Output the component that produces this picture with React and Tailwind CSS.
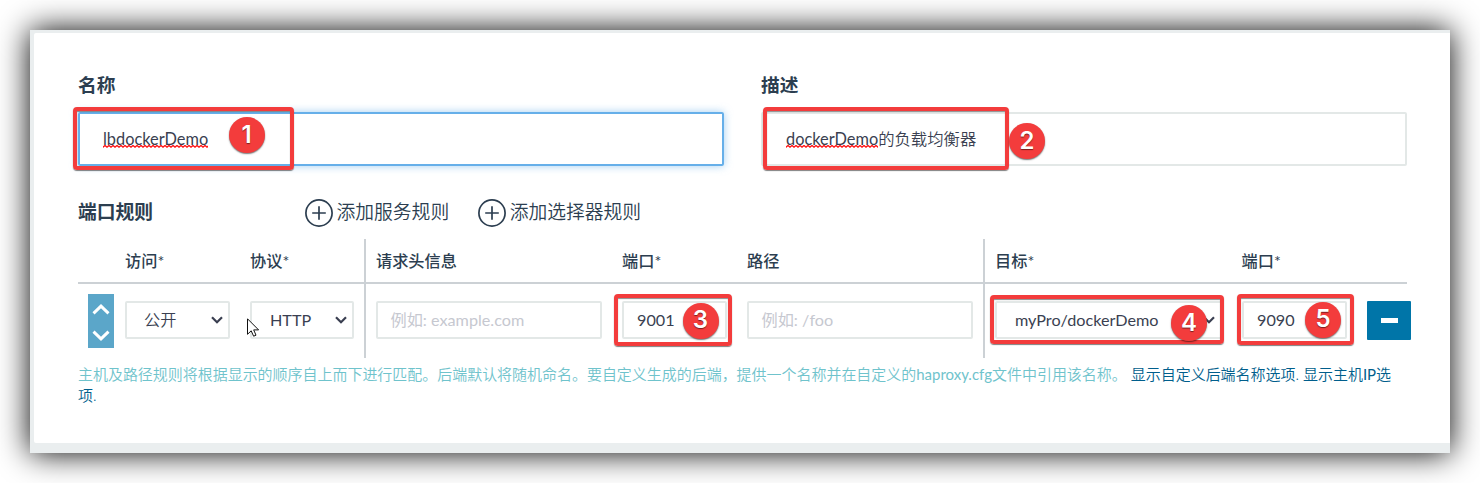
import React from "react";

const mark =
  "pointer-events-none absolute z-10 rounded-[4px] border-4 border-[#f33c3c] shadow-[0_1px_1px_rgba(0,0,0,0.5),inset_0_1px_1px_rgba(0,0,0,0.45)]";

function Badge({ n, className }) {
  return (
    <span
      className={`absolute z-20 flex h-9 w-9 items-center justify-center rounded-full bg-[#f33c3c] pb-px font-['Inter',sans-serif] text-[24px] leading-none font-semibold text-white shadow-[0_1px_1.5px_rgba(0,0,0,0.55)] [text-shadow:0_1px_1px_rgba(0,0,0,0.5)] ${className}`}
    >
      {n}
    </span>
  );
}

function Chevron({ className }) {
  return (
    <svg viewBox="0 0 12 8" className={className} fill="none" stroke="currentColor" strokeWidth="2.2">
      <path d="M1 1.2 L6 6.2 L11 1.2" />
    </svg>
  );
}

function AddIcon() {
  return (
    <svg viewBox="0 0 28 28" className="h-7 w-7" fill="none" stroke="currentColor">
      <circle cx="14" cy="14" r="13.1" strokeWidth="1.7" />
      <path d="M14 7.2 V20.8 M7.2 14 H20.8" strokeWidth="1.7" />
    </svg>
  );
}

function Squiggle({ children }) {
  return (
    <span className="relative inline-block">
      {children}
      <svg className="absolute bottom-[3px] left-0 h-[3px] w-full" aria-hidden="true">
        <defs>
          <pattern id="wave" width="4" height="3" patternUnits="userSpaceOnUse">
            <path d="M-1 3 L2 0.5 L5 3" fill="none" stroke="#ff1010" strokeWidth="1.3" />
          </pattern>
        </defs>
        <rect width="100%" height="3" fill="url(#wave)" />
      </svg>
    </span>
  );
}

function Field({ width, className = "", children }) {
  return (
    <div className={`relative flex h-[38px] shrink-0 items-center rounded-[2px] border-2 border-[#e3e8e7] ${width} ${className}`}>
      {children}
    </div>
  );
}

function Head({ width, required, children }) {
  return (
    <div className={`shrink-0 font-medium ${width}`}>
      {children}
      {required && <span className="font-normal">*</span>}
    </div>
  );
}

const headRow = "flex h-[45px] items-center border-b-2 border-[#ccd1d5]";
const bodyRow = "flex h-[74px] items-center pb-[2px]";

export default function App() {
  return (
    <div className="h-[483px] w-[1480px] overflow-hidden bg-white p-[30px] font-['Lato','Noto_Sans_CJK_SC',sans-serif] text-[16.2px] leading-6 text-[#3a3f51]">
      <div className="h-[423px] w-[1420px] bg-[#eaeeef] pt-[3px] pl-1 shadow-[0_0_30px_#000]">
        <div className="h-[410px] rounded-l-[2px] bg-white pt-[38px] pl-11">
          <div className="flex gap-[37px]">
            <div className="w-[646px]">
              <div className="h-[41px] text-[18.7px] leading-7 font-bold text-[#2c3e50]">名称</div>
              <div className="relative flex h-[54px] items-center rounded-[2px] border-2 border-[#66afe9] pl-[23px] text-[16.35px] shadow-[0_0_8px_rgba(102,175,233,0.6)]">
                <Squiggle>lbdockerDemo</Squiggle>
                <div className={`${mark} -top-[7px] -left-[7px] h-[63px] w-[221px]`} />
                <Badge n="1" className="top-[3px] left-[148.5px]" />
              </div>
            </div>
            <div className="w-[646px]">
              <div className="h-[41px] text-[18.7px] leading-7 font-bold text-[#2c3e50]">描述</div>
              <div className="relative flex h-[54px] items-center rounded-[2px] border-2 border-[#e3e8e7] pl-[23px] text-[16.35px]">
                <Squiggle>dockerDemo</Squiggle>
                <span className="font-[350]">的负载均衡器</span>
                <div className={`${mark} -top-[7px] left-0 h-[63px] w-[246px]`} />
                <Badge n="2" className="top-[9px] left-[246px]" />
              </div>
            </div>
          </div>

          <div className="mt-[31px] flex h-[31px] items-center text-[18.8px] text-[#2c3e50]">
            <div className="w-[227px] pb-[2px] font-bold">端口规则</div>
            <div className="flex items-center gap-[3.5px] font-[350]">
              <AddIcon />
              <span className="pb-[2px]">添加服务规则</span>
            </div>
            <div className="ml-[29px] flex items-center gap-[3.5px] font-[350]">
              <AddIcon />
              <span className="pb-[2px]">添加选择器规则</span>
            </div>
          </div>

          <div className="mt-[11px] flex h-[119px] w-[1329px]">
            <div className="w-[286px] shrink-0">
              <div className={`${headRow} pl-[47px] text-[#2c3e50]`}>
                <Head width="w-[125px]" required>访问</Head>
                <Head width="w-[104px]" required>协议</Head>
              </div>
              <div className={`${bodyRow} relative pl-2.5`}>
                <div className="mt-px mr-[11px] flex h-[54px] w-[26px] flex-col items-center justify-between bg-[#5ba6c9] py-[10px] text-white">
                  <svg viewBox="0 0 18 11" className="h-[11px] w-[18px]" fill="none" stroke="currentColor" strokeWidth="3">
                    <path d="M1.5 9.3 L9 2.1 L16.5 9.3" />
                  </svg>
                  <svg viewBox="0 0 18 11" className="-mb-[3px] h-[11px] w-[18px]" fill="none" stroke="currentColor" strokeWidth="3">
                    <path d="M1.5 1.7 L9 8.9 L16.5 1.7" />
                  </svg>
                </div>
                <Field width="w-[105px]" className="mr-5 pr-[5px] pl-[17px]">
                  <span className="font-[350]">公开</span>
                  <Chevron className="ml-auto h-2 w-3" />
                </Field>
                <Field width="w-[104px]" className="pr-[5px] pl-[18px]">
                  HTTP
                  <Chevron className="ml-auto h-2 w-3" />
                </Field>
                <svg viewBox="0 0 12 19" className="absolute top-[34px] left-[169px] h-[19px] w-3" fill="#fff" stroke="#111" strokeWidth="1">
                  <path d="M0.5 0.8 V16.3 L4.2 12.8 L6.6 18.2 L9 17.2 L6.7 11.9 H11.6 Z" />
                </svg>
              </div>
            </div>

            <div className="w-[619px] shrink-0 border-l-2 border-[#ccd1d5]">
              <div className={`${headRow} pl-2.5 text-[#2c3e50]`}>
                <Head width="w-[246px]">请求头信息</Head>
                <Head width="w-[125px]" required>端口</Head>
                <Head width="w-[226px]">路径</Head>
              </div>
              <div className={`${bodyRow} gap-5 pl-2.5`}>
                <Field width="w-[226px]" className="pl-[12.5px] text-[#c6c8d0]">例如: example.com</Field>
                <Field width="w-[105px]" className="pl-[13px]">
                  9001
                  <div className={`${mark} -top-[9px] -left-2.5 h-[52px] w-[118px]`} />
                  <Badge n="3" className="-top-[0.5px] left-[58.5px]" />
                </Field>
                <Field width="w-[226px]" className="pl-[12.5px] text-[#c6c8d0]">例如: /foo</Field>
              </div>
            </div>

            <div className="w-[424px] shrink-0 border-l-2 border-[#ccd1d5]">
              <div className={`${headRow} pl-2.5 text-[#2c3e50]`}>
                <Head width="w-[246.5px]" required>目标</Head>
                <Head width="w-[105px]" required>端口</Head>
              </div>
              <div className={`${bodyRow} pl-2.5`}>
                <Field width="w-[227px]" className="mr-5 pr-[5px] pl-[18px]">
                  myPro/dockerDemo
                  <Chevron className="ml-auto h-2 w-3" />
                  <div className={`${mark} -top-2 -left-[7px] h-[49px] w-[234px]`} />
                  <Badge n="4" className="top-[2px] left-[174px]" />
                </Field>
                <Field width="w-[105px]" className="mr-5 pl-[13px]">
                  9090
                  <div className={`${mark} -top-[9px] -left-[7px] h-[51px] w-[117px]`} />
                  <Badge n="5" className="-top-[1.5px] left-[61px]" />
                </Field>
                <div className="mt-px flex h-[39px] w-11 shrink-0 items-center justify-center rounded-[1px] bg-[#0075a8]">
                  <span className="h-[5px] w-[17px] bg-white" />
                </div>
              </div>
            </div>
          </div>

          <div className="mt-[6px] w-[1329px] text-[14.98px] leading-[21px] font-[350] whitespace-nowrap text-[#005e8c]">
            <span className="text-[#6fc3cc]">
              主机及路径规则将根据显示的顺序自上而下进行匹配。后端默认将随机命名。要自定义生成的后端，提供一个名称并在自定义的<span className="font-normal">haproxy.cfg</span>文件中引用该名称。
            </span>{" "}
            显示自定义后端名称选项. 显示主机<span className="font-normal">IP</span>选
            <br />
            项.
          </div>
        </div>
      </div>
    </div>
  );
}
